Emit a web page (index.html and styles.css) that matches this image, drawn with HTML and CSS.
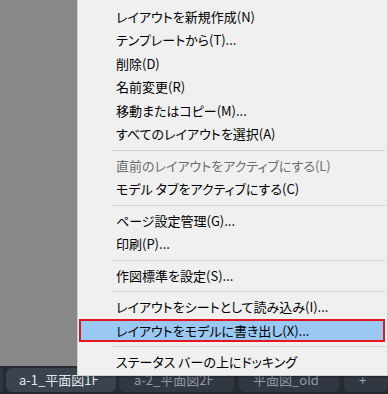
FILE: index.html
```html
<!DOCTYPE html>
<html lang="ja">
<head>
    <meta charset="UTF-8">
    <title>レイアウト タブ メニュー</title>
    <link rel="stylesheet" href="styles.css">
</head>
<body>
    <div class="screen">
        <div class="workspace"></div>

        <div class="layout-tabs">
            <div class="tab-stub"></div>
            <div class="layout-tab active">a-1_平面図1F</div>
            <div class="layout-tab second">a-2_平面図2F</div>
            <div class="layout-tab third">平面図_old</div>
            <div class="layout-tab add-tab">+</div>
        </div>

        <ul class="context-menu">
            <li class="menu-item">レイアウトを新規作成(N)</li>
            <li class="menu-item">テンプレートから(T)...</li>
            <li class="menu-item">削除(D)</li>
            <li class="menu-item">名前変更(R)</li>
            <li class="menu-item">移動またはコピー(M)...</li>
            <li class="menu-item">すべてのレイアウトを選択(A)</li>
            <li class="menu-separator"></li>
            <li class="menu-item disabled">直前のレイアウトをアクティブにする(L)</li>
            <li class="menu-item">モデル タブをアクティブにする(C)</li>
            <li class="menu-separator"></li>
            <li class="menu-item">ページ設定管理(G)...</li>
            <li class="menu-item">印刷(P)...</li>
            <li class="menu-separator"></li>
            <li class="menu-item">作図標準を設定(S)...</li>
            <li class="menu-separator"></li>
            <li class="menu-item">レイアウトをシートとして読み込み(I)...</li>
            <li class="menu-item selected">レイアウトをモデルに書き出し(X)...</li>
            <li class="menu-separator"></li>
            <li class="menu-item">ステータス バーの上にドッキング</li>
        </ul>
    </div>
</body>
</html>
```

FILE: styles.css
```css
body {
    margin: 0;
    font-family: "Noto Sans CJK JP", "Noto Sans", sans-serif;
    background: #898989;
}

.screen {
    position: relative;
    width: 388px;
    height: 394px;
    display: flex;
    flex-direction: column;
    overflow: hidden;
}

.workspace {
    flex: 1;
    background: #898989;
}

/* layout tabs at the bottom */
.layout-tabs {
    height: 28px;
    background: #252b33;
    display: flex;
    align-items: flex-end;
    padding-bottom: 2px;
    box-sizing: border-box;
}

.tab-stub {
    width: 7px;
    height: 24px;
    margin-right: 3px;
    background: #303741;
    border-radius: 0 6px 6px 0;
}

.layout-tab {
    height: 24px;
    line-height: 24px;
    padding-left: 14px;
    font-size: 13px;
    color: #8f99a6;
    background: #313842;
    border-radius: 6px;
    white-space: nowrap;
    box-sizing: border-box;
    flex: none;
}

.layout-tab.active {
    width: 110px;
    padding-left: 13px;
    color: #e4e8ee;
    background: #3b434f;
}

.layout-tab.second {
    width: 115px;
    margin-left: 3px;
    padding-left: 15px;
}

.layout-tab.third {
    width: 100px;
    margin-left: 5px;
}

.layout-tab.add-tab {
    width: 44px;
    margin-left: 5px;
    padding-left: 15px;
    color: #9aa3ae;
}

/* context menu overlay */
.context-menu {
    position: absolute;
    left: 77px;
    top: -1px;
    width: 311px;
    height: 377px;
    margin: 0;
    padding: 4.5px 2px 0 1px;
    box-sizing: border-box;
    list-style: none;
    background: #f0f0f0;
    border: 1px solid #cfcfcf;
    box-shadow: 1px 1px 2px rgba(0, 0, 0, 0.35);
}

.menu-item {
    height: 23.5px;
    line-height: 23.5px;
    padding-left: 37px;
    font-size: 13px;
    font-feature-settings: "palt";
    color: #000;
    white-space: nowrap;
    box-sizing: border-box;
}

.menu-item.disabled {
    color: #6d6d6d;
}

.menu-item.selected {
    background: #99c9f3;
    border: 2px solid #e5141e;
    padding-left: 35px;
    line-height: 19.5px;
}

.menu-separator {
    height: 1px;
    margin: 4px 0 3px 32px;
    background: #d4d4d4;
}
```
